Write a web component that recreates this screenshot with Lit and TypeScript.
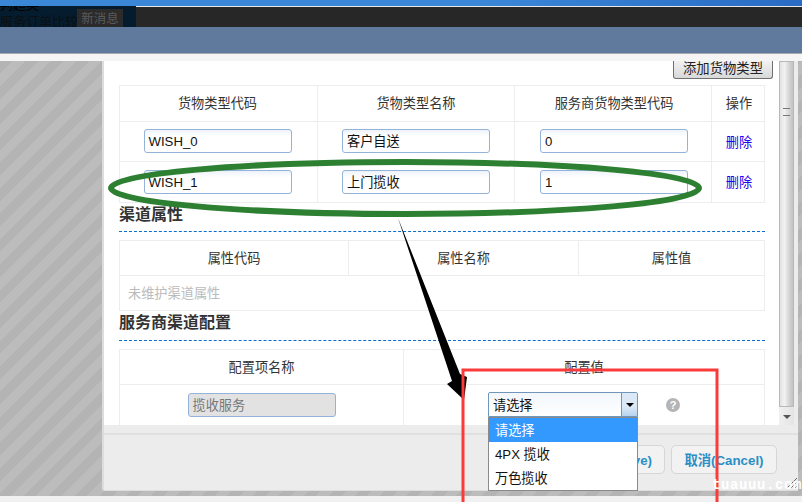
import { LitElement, html, css, svg } from "lit";
import { customElement } from "lit/decorators.js";

@customElement("app-root")
export class AppRoot extends LitElement {
  static styles = css`
    :host { display: block; width: 802px; height: 502px; position: relative; overflow: hidden; background: #f1f1f1;
      font-family: "Liberation Sans", "Noto Sans CJK SC", sans-serif; font-size: 13.2px; color: #333; }
    .top-blue { height: 6px; background: linear-gradient(90deg, #3a87d8, #3a87d8 60%, #2a6cc4); }
    .dark { height: 21px; background: #272727; display: flex; }
    .dark-right { flex: 1; border-top: 1px solid #e8e8e8; }
    .dark-left { width: 136px; height: 21px; background: #051c2e; position: relative; overflow: hidden; color: #000; font-size: 13px; flex: none; }
    .msg { position: absolute; left: 77px; top: 3px; width: 46px; height: 18px; background: #2b2b2b; color: #5a5a5a; font-size: 12.5px; line-height: 20px; text-align: center; }
    .clip-a { position: absolute; left: 0; top: -8px; white-space: nowrap; line-height: 14px; }
    .clip-b { position: absolute; left: 0; top: 8px; white-space: nowrap; line-height: 16px; color: #0c0f12; }
    .steel { height: 27px; background: #5f7a9d; border-bottom: 1px solid #a9a9ad; box-sizing: border-box; }
    .pale { height: 7px; background: #f5f5f5; }
    .main { display: flex; height: 435px; background: repeating-linear-gradient(135deg, #b4b4b4 0 9px, #bcbcbc 9px 18px); }
    .gutter { width: 102px; flex: none; }
    .dialog { width: 696px; height: 430px; flex: none; background: #ececec; border-left: 2px solid #dcdcdc; box-sizing: border-box; border-bottom: 1px solid #ddd; display: flex; flex-direction: column; position: relative; border-radius: 0 0 0 3px; }
    .body { height: 364px; flex: none; display: flex; overflow: hidden; }
    .content { width: 675px; flex: none; background: #fff; padding: 0 0 0 15px; box-sizing: border-box; overflow: hidden; }
    .scroll { width: 15px; flex: none; background: linear-gradient(90deg, #f0f0f0, #e4e4e4); display: flex; flex-direction: column; position: relative; }
    .thumb { height: 346px; flex: none; background: linear-gradient(90deg, #e2e2e2, #f2f2f2 35%, #d4d4d4 70%, #c2c2c2); border: 1px solid #b8b8b8; box-sizing: border-box; display: flex; justify-content: center; padding-top: 46px; }
    .grip { width: 7px; height: 6px; border-top: 1px solid #777; border-bottom: 1px solid #777; }
    .down { margin: 8px auto 0; width: 0; height: 0; border-left: 4px solid transparent; border-right: 4px solid transparent; border-top: 4px solid #555; }
    .add-row { display: flex; justify-content: flex-end; height: 24px; padding-right: 6px; }
    .add { width: 100px; height: 18px; box-sizing: border-box; border: 1px solid #707070; border-top: none; border-radius: 0 0 3px 3px; background: linear-gradient(#f2f2f2, #d8d8d8); color: #222; font-size: 13.33px; text-align: center; line-height: 15px; }
    table { width: 645px; border-collapse: collapse; table-layout: fixed; }
    th, td { border: 1px solid #ededed; text-align: center; font-weight: normal; padding: 0 0 1px; vertical-align: middle; }
    th { height: 33px; padding-bottom: 2px; }
    .t1 th:nth-child(1), .t1 td:nth-child(1) { padding-right: 2px; }
    .t1 th:nth-child(3), .t1 td:nth-child(3), .t1 th:nth-child(4), .t1 td:nth-child(4) { padding-left: 2px; }
    .t2 th, .t3 th { height: 32px; }
    .r1 td { height: 38px; padding-bottom: 1px; }
    .r2 td { height: 39px; padding-bottom: 1px; }
    .r3 td { height: 32px; padding-bottom: 2px; }
    .r4 td { height: 39px; padding-bottom: 2px; }
    .empty { text-align: left; padding-left: 8px; color: #bbb; }
    .inp { display: block; margin: 0 auto; width: 148px; height: 24px; box-sizing: border-box; border: 1px solid #93b4d8; border-radius: 3px; background: linear-gradient(#eef3f9, #fff 30%); text-align: left; padding-left: 4px; line-height: 23px; color: #111; }
    .inp.dis { background: #e2e2e2; color: #777; }
    .del { color: #2200ee; }
    h3 { margin: 0 0 8px; font-size: 16px; font-weight: bold; color: #333; height: 29px; line-height: 24px; border-bottom: 1px dashed #0a6ecc; width: 646px; box-sizing: border-box; }
    .h-b { height: 30px; }
    .foot { flex: 1; border-top: 2px solid #dfdfdf; margin-top: 8px; display: flex; justify-content: flex-end; gap: 6px; padding: 10px 21px 0 0; }
    .btn { height: 29px; box-sizing: border-box; border: 1px solid #d6d6d6; border-radius: 5px; background: #f2f2f2; color: #2a8fc5; font-size: 13.3px; font-weight: bold; line-height: 29px; text-align: center; }
    .save { width: 120px; text-align: right; padding-right: 12px; }
    .cancel { width: 106px; }
    .sel-cell { display: flex; align-items: center; height: 39px; padding-left: 84px; box-sizing: border-box; }
    .sel { width: 150px; height: 25px; box-sizing: border-box; border: 1px solid #7196bb; display: flex; background: linear-gradient(#f2f6fb, #fff); color: #111; text-align: left; line-height: 25px; padding-left: 4px; border-radius: 2px 2px 0 0; }
    .sel span { flex: 1; }
    .arrow { width: 15px; background: linear-gradient(#dbe9f6 60%, #b6d4ee); border-left: 1px solid #7196bb; display: flex; align-items: center; justify-content: center; }
    .arrow i { width: 0; height: 0; border-left: 4px solid transparent; border-right: 4px solid transparent; border-top: 4px solid #000; }
    .help { width: 14px; height: 14px; border-radius: 50%; background: #b5b5b5; color: #fff; font-size: 11px; font-weight: bold; line-height: 14px; text-align: center; margin-left: 28px; }
    .list { position: absolute; left: 488px; top: 417px; width: 150px; height: 74px; box-sizing: border-box; border: 1px solid #8a8a8a; background: #fff; color: #111; }
    .list div { height: 24px; line-height: 25px; padding-left: 6px; }
    .list .on { background: #3399ff; color: #fff; }
    .overlay { position: absolute; left: 0; top: 0; pointer-events: none; }
    .wm { position: absolute; left: 712px; top: 477px; color: #fff; font: bold 14px "Liberation Mono", monospace; letter-spacing: 0.6px; white-space: nowrap; }
  `;

  render() {
    return html`
      <div class="top-blue"></div>
      <div class="dark">
        <div class="dark-left">
          <div class="clip-a">判超类</div>
          <div class="clip-b">服务订单比较多</div>
          <div class="msg">新消息</div>
        </div>
        <div class="dark-right"></div>
      </div>
      <div class="steel"></div>
      <div class="pale"></div>
      <div class="main">
        <div class="gutter"></div>
        <div class="dialog">
          <div class="body">
            <div class="content">
              <div class="add-row"><div class="add">添加货物类型</div></div>
              <table class="t1">
                <colgroup><col style="width:198px"><col style="width:197px"><col style="width:197px"><col style="width:53px"></colgroup>
                <tr><th>货物类型代码</th><th>货物类型名称</th><th>服务商货物类型代码</th><th>操作</th></tr>
                <tr class="r1"><td><span class="inp">WISH_0</span></td><td><span class="inp">客户自送</span></td><td><span class="inp">0</span></td><td class="del">删除</td></tr>
                <tr class="r2"><td><span class="inp">WISH_1</span></td><td><span class="inp">上门揽收</span></td><td><span class="inp">1</span></td><td class="del">删除</td></tr>
              </table>
              <h3>渠道属性</h3>
              <table class="t2">
                <colgroup><col style="width:229px"><col style="width:230px"><col style="width:186px"></colgroup>
                <tr><th>属性代码</th><th>属性名称</th><th>属性值</th></tr>
                <tr class="r3"><td class="empty" colspan="3">未维护渠道属性</td></tr>
              </table>
              <h3 class="h-b">服务商渠道配置</h3>
              <table class="t3">
                <colgroup><col style="width:284px"><col style="width:361px"></colgroup>
                <tr><th>配置项名称</th><th>配置值</th></tr>
                <tr class="r4"><td><span class="inp dis">揽收服务</span></td><td>
                  <div class="sel-cell"><div class="sel"><span>请选择</span><div class="arrow"><i></i></div></div><div class="help">?</div></div>
                </td></tr>
              </table>
            </div>
            <div class="scroll">
              <div class="thumb"><div class="grip"></div></div>
              <div class="down"></div>
            </div>
          </div>
          <div class="foot">
            <div class="btn save">保存(Save)</div>
            <div class="btn cancel">取消(Cancel)</div>
          </div>
        </div>
      </div>
      <div class="list"><div class="on">请选择</div><div>4PX 揽收</div><div>万色揽收</div></div>
      <svg class="overlay" width="802" height="502">
        ${svg`
          <ellipse cx="405" cy="188" rx="294" ry="26" fill="none" stroke="#2d8031" stroke-width="6"/>
          <path d="M398 218 L460 374 L467 377 L464 400 L447 384 L452 381 Z" fill="#000"/>
          <rect x="463" y="370" width="254" height="140" fill="none" stroke="#fb3a3a" stroke-width="3"/>
          <path d="M787 488 L797 478 M791 488 L797 482 M795 488 L797 486" stroke="#666" stroke-width="1"/>
        `}
      </svg>
      <div class="wm">tuauuu.com</div>
    `;
  }
}
